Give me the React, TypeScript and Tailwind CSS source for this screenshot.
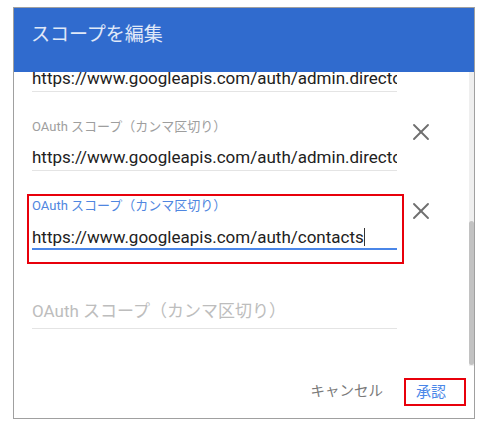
import { X } from "lucide-react";

const font = "font-['Roboto','Noto_Sans_CJK_JP',sans-serif]";

const App = () => {
  return (
    <div className={`w-[488px] h-[442px] bg-white pt-[7px] pl-[13px] ${font}`}>
      <div className="w-[462px] h-[412px] border border-[#a0a0a0] flex flex-col">
        {/* header */}
        <div className="h-[64px] shrink-0 bg-[#306bce] pl-[17px] pt-[15px]">
          <h2 className="text-[19px] leading-[24px] text-white/85">スコープを編集</h2>
        </div>

        {/* body */}
        <div className="h-[298px] shrink-0 flex">
          <div className="flex-1 overflow-hidden pl-[18px]">
            <div className="-mt-[6px] w-[365px] overflow-hidden whitespace-nowrap border-b border-[#e4e4e4] pb-px text-[17px] leading-[24px] text-[#212121]">
              https://www.googleapis.com/auth/admin.directory.user
            </div>

            <div className="mt-[27px] flex">
              <div className="w-[365px]">
                <div className="text-[13px] leading-[16px] text-[#9e9e9e]">OAuth スコープ（カンマ区切り）</div>
                <div className="mt-[10px] overflow-hidden whitespace-nowrap border-b border-[#e4e4e4] pb-px text-[17px] leading-[24px] text-[#212121]">
                  https://www.googleapis.com/auth/admin.directory.group
                </div>
              </div>
              <X size={28} strokeWidth={1.6} className="ml-[10px] -mt-[1px] text-[#6f6f6f]" />
            </div>

            <div className="mt-[23px] flex">
              <div className="-ml-[5px] w-[377px] border-2 border-[#e8000b] pl-[3px] pr-[5px] pt-[2px] pb-[12px]">
                <div className="text-[13px] leading-[16px] text-[#4f86e0]">OAuth スコープ（カンマ区切り）</div>
                <div className="mt-[12px] whitespace-nowrap border-b-2 border-[#4a86e8] text-[17px] leading-[22px] text-[#212121]">
                  https://www.googleapis.com/auth/contacts
                  <span className="inline-block w-px h-[18px] bg-[#333] align-[-3px]" />
                </div>
              </div>
              <X size={28} strokeWidth={1.6} className="ml-[3px] mt-[3px] text-[#6f6f6f]" />
            </div>

            <div className="mt-[35px] w-[365px] border-b border-[#e4e4e4] pb-[5px] text-[17px] leading-[24px] text-[#bdbdbd]">
              OAuth スコープ（カンマ区切り）
            </div>
          </div>

          {/* scrollbar */}
          <div className="w-[5px] h-[294px] bg-[#efefef] pt-[149px]">
            <div className="h-[144px] rounded-t-[3px] rounded-b-[3px] bg-[#c2c2c2]" />
          </div>
        </div>

        {/* footer */}
        <div className="flex-1 flex items-start justify-end pr-[8px] pt-[8px]">
          <button className="h-[28px] mr-[21px] flex items-center text-[14.5px] text-[#7a7a7a]">キャンセル</button>
          <button className="w-[62px] h-[28px] border-2 border-[#e8000b] pl-[10px] flex items-center text-[15px] text-[#4a86e8]">
            承認
          </button>
        </div>
      </div>
    </div>
  );
};

export default App;
